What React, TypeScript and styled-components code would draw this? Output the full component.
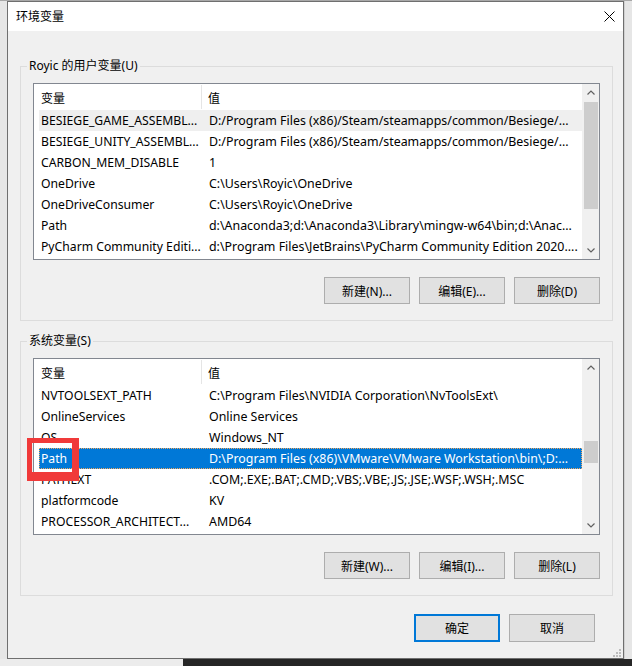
import React from "react";
import styled, { createGlobalStyle } from "styled-components";

const Global = createGlobalStyle`
  html, body { margin: 0; padding: 0; }
  body {
    width: 632px; height: 666px; overflow: hidden;
    font-family: "Noto Sans", "Noto Sans CJK SC", sans-serif;
    font-size: 12px; color: #000; background: #e8e8e8;
  }
  * { box-sizing: border-box; }
`;

const Screen = styled.div`
  width: 632px; height: 666px;
  display: flex; flex-direction: column;
`;
const TopStrip = styled.div`
  height: 1px; background: #a8a8a8;
`;
const Middle = styled.div`
  display: flex; height: 658px;
`;
const SideGap = styled.div<{ $w: number }>`
  width: ${(p) => p.$w}px; background: #e6e6e6;
  border-left: ${(p) => (p.$w > 7 ? "1px solid #d0d0d0" : "none")};
`;
const BottomStrip = styled.div`
  flex: 1; display: flex;
`;
const Shadow = styled.div`
  width: 183px; background: #ececec;
`;
const Taskbar = styled.div`
  flex: 1; background: #262626;
`;

const Window = styled.div`
  width: 617px; height: 658px;
  border: 1px solid #6f6f6f;
  background: #f0f0f0;
  display: flex; flex-direction: column;
`;
const TitleBar = styled.div`
  height: 29px; background: #fff;
  display: flex; align-items: center; justify-content: space-between;
  padding: 0 8px 0 8px;
`;
const TitleText = styled.span`
  font-size: 12px; line-height: 16px; margin-top: 1px;
`;

const Group = styled.fieldset<{ $top: number }>`
  margin: ${(p) => p.$top}px 10px 0 12px;
  width: 593px;
  border: 1px solid #dcdcdc;
  padding: 9px 12px 16px 12px;
  min-width: 0;
`;
const Legend = styled.legend`
  margin-left: -6px;
  padding: 0 2px;
  font-size: 12px; line-height: 16px;
`;

const ListBox = styled.div`
  position: relative;
  height: 177px;
  border: 1px solid #828790;
  background: #fff;
  display: flex;
`;
const ListMain = styled.div`
  flex: 1; min-width: 0;
  display: flex; flex-direction: column;
  padding-left: 5px;
`;
const HeaderRow = styled.div`
  height: 26px; display: flex;
`;
const HeadCell = styled.div<{ $first?: boolean }>`
  display: flex; align-items: center;
  padding: 2px 0 0 ${(p) => (p.$first ? 2 : 6)}px;
  width: ${(p) => (p.$first ? "163px" : "auto")};
  flex: ${(p) => (p.$first ? "none" : 1)};
  border-right: ${(p) => (p.$first ? "1px solid #e5e5e5" : "none")};
  margin: 1px 0 1px 0;
`;
const Row = styled.div<{ $state?: "hover" | "selected" }>`
  height: 21px; display: flex; align-items: center;
  background: ${(p) =>
    p.$state === "selected" ? "#0078d7" : p.$state === "hover" ? "#efefef" : "transparent"};
  color: ${(p) => (p.$state === "selected" ? "#fff" : "#000")};
  outline: ${(p) => (p.$state === "selected" ? "1px dotted #f0a860" : "none")};
  outline-offset: -1px;
  white-space: nowrap;
`;
const NameCell = styled.div`
  width: 164px; padding-left: 2px; flex: none;
  font-size: 12.2px;
  overflow: hidden; text-overflow: ellipsis;
`;
const ValueCell = styled.div`
  flex: 1; min-width: 0; padding-left: 6px;
  font-size: 12.4px;
  overflow: hidden; text-overflow: ellipsis;
`;

const ScrollBar = styled.div`
  width: 17px; flex: none; background: #f0f0f0;
  display: flex; flex-direction: column;
`;
const ScrollArrow = styled.div`
  height: 17px; display: flex; align-items: center; justify-content: center;
`;
const Track = styled.div`
  flex: 1; display: flex; flex-direction: column;
`;
const Thumb = styled.div<{ $offset: number; $size: number }>`
  margin: ${(p) => p.$offset}px 1px 0 2px;
  height: ${(p) => p.$size}px;
  background: #cdcdcd;
`;

const ButtonRow = styled.div<{ $top: number; $right: number }>`
  display: flex; justify-content: flex-end; gap: 9px;
  margin-top: ${(p) => p.$top}px;
  padding-right: ${(p) => p.$right}px;
`;
const Button = styled.button<{ $default?: boolean; $h: number }>`
  width: 86px; height: ${(p) => p.$h}px;
  background: #e1e1e1;
  border: ${(p) => (p.$default ? "2px solid #0078d7" : "1px solid #adadad")};
  font-family: "Noto Sans", "Noto Sans CJK SC", sans-serif;
  font-size: 12px; color: #000; padding: 0;
  display: flex; align-items: center; justify-content: center;
`;
const GripRow = styled.div`
  flex: 1; display: flex; justify-content: flex-end; align-items: flex-end;
  padding: 0 2px 1px 0;
`;

const Annotation = styled.div`
  position: absolute;
  left: -7px; top: 79px;
  width: 52px; height: 43px;
  border-style: solid;
  border-color: #f03a3a;
  border-width: 5px 7px 9px 5px;
  pointer-events: none;
`;

const Chevron = ({ up }: { up?: boolean }) => (
  <svg width="8" height="5" viewBox="0 0 8 5">
    <path
      d={up ? "M0.5 4.5 L4 1 L7.5 4.5" : "M0.5 0.5 L4 4 L7.5 0.5"}
      fill="none"
      stroke="#606060"
      strokeWidth="1.2"
    />
  </svg>
);

const CloseIcon = () => (
  <svg width="11" height="11" viewBox="0 0 11 11">
    <path d="M0.5 0.5 L10.5 10.5 M10.5 0.5 L0.5 10.5" stroke="#000" strokeWidth="1" />
  </svg>
);

const Grip = () => (
  <svg width="8" height="8" viewBox="0 0 8 8">
    {[
      [6, 0],
      [3, 3],
      [6, 3],
      [0, 6],
      [3, 6],
      [6, 6],
    ].map(([x, y], i) => (
      <rect key={i} x={x} y={y} width="2" height="2" fill="#bcbcbc" />
    ))}
  </svg>
);

type Item = { name: string; value: string; state?: "hover" | "selected" };

const userVars: Item[] = [
  { name: "BESIEGE_GAME_ASSEMBL...", value: "D:/Program Files (x86)/Steam/steamapps/common/Besiege/...", state: "hover" },
  { name: "BESIEGE_UNITY_ASSEMBL...", value: "D:/Program Files (x86)/Steam/steamapps/common/Besiege/..." },
  { name: "CARBON_MEM_DISABLE", value: "1" },
  { name: "OneDrive", value: "C:\\Users\\Royic\\OneDrive" },
  { name: "OneDriveConsumer", value: "C:\\Users\\Royic\\OneDrive" },
  { name: "Path", value: "d:\\Anaconda3;d:\\Anaconda3\\Library\\mingw-w64\\bin;d:\\Anac..." },
  { name: "PyCharm Community Editi...", value: "d:\\Program Files\\JetBrains\\PyCharm Community Edition 2020...." },
];

const sysVars: Item[] = [
  { name: "NVTOOLSEXT_PATH", value: "C:\\Program Files\\NVIDIA Corporation\\NvToolsExt\\" },
  { name: "OnlineServices", value: "Online Services" },
  { name: "OS", value: "Windows_NT" },
  { name: "Path", value: "D:\\Program Files (x86)\\VMware\\VMware Workstation\\bin\\;D:...", state: "selected" },
  { name: "PATHEXT", value: ".COM;.EXE;.BAT;.CMD;.VBS;.VBE;.JS;.JSE;.WSF;.WSH;.MSC" },
  { name: "platformcode", value: "KV" },
  { name: "PROCESSOR_ARCHITECT...", value: "AMD64" },
];

const VarList = ({
  items,
  thumb,
  annotate,
}: {
  items: Item[];
  thumb: [number, number];
  annotate?: boolean;
}) => (
  <ListBox>
    <ListMain>
      <HeaderRow>
        <HeadCell $first>变量</HeadCell>
        <HeadCell>值</HeadCell>
      </HeaderRow>
      {items.map((it, i) => (
        <Row key={i} $state={it.state}>
          <NameCell>{it.name}</NameCell>
          <ValueCell>{it.value}</ValueCell>
        </Row>
      ))}
    </ListMain>
    <ScrollBar>
      <ScrollArrow>
        <Chevron up />
      </ScrollArrow>
      <Track>
        <Thumb $offset={thumb[0]} $size={thumb[1]} />
      </Track>
      <ScrollArrow>
        <Chevron />
      </ScrollArrow>
    </ScrollBar>
    {annotate && <Annotation />}
  </ListBox>
);

export default function App() {
  return (
    <Screen>
      <Global />
      <TopStrip />
      <Middle>
        <SideGap $w={7} />
        <Window>
          <TitleBar>
            <TitleText>环境变量</TitleText>
            <CloseIcon />
          </TitleBar>
          <Group $top={27}>
            <Legend>Royic 的用户变量(U)</Legend>
            <VarList items={userVars} thumb={[1, 107]} />
            <ButtonRow $top={17} $right={0}>
              <Button $h={27}>新建(N)...</Button>
              <Button $h={27}>编辑(E)...</Button>
              <Button $h={27}>删除(D)</Button>
            </ButtonRow>
          </Group>
          <Group $top={12}>
            <Legend>系统变量(S)</Legend>
            <VarList items={sysVars} thumb={[65, 22]} annotate />
            <ButtonRow $top={17} $right={0}>
              <Button $h={27}>新建(W)...</Button>
              <Button $h={27}>编辑(I)...</Button>
              <Button $h={27}>删除(L)</Button>
            </ButtonRow>
          </Group>
          <ButtonRow $top={18} $right={28}>
            <Button $default $h={28}>确定</Button>
            <Button $h={28}>取消</Button>
          </ButtonRow>
          <GripRow>
            <Grip />
          </GripRow>
        </Window>
        <SideGap $w={8} />
      </Middle>
      <BottomStrip>
        <Shadow />
        <Taskbar />
      </BottomStrip>
    </Screen>
  );
}
